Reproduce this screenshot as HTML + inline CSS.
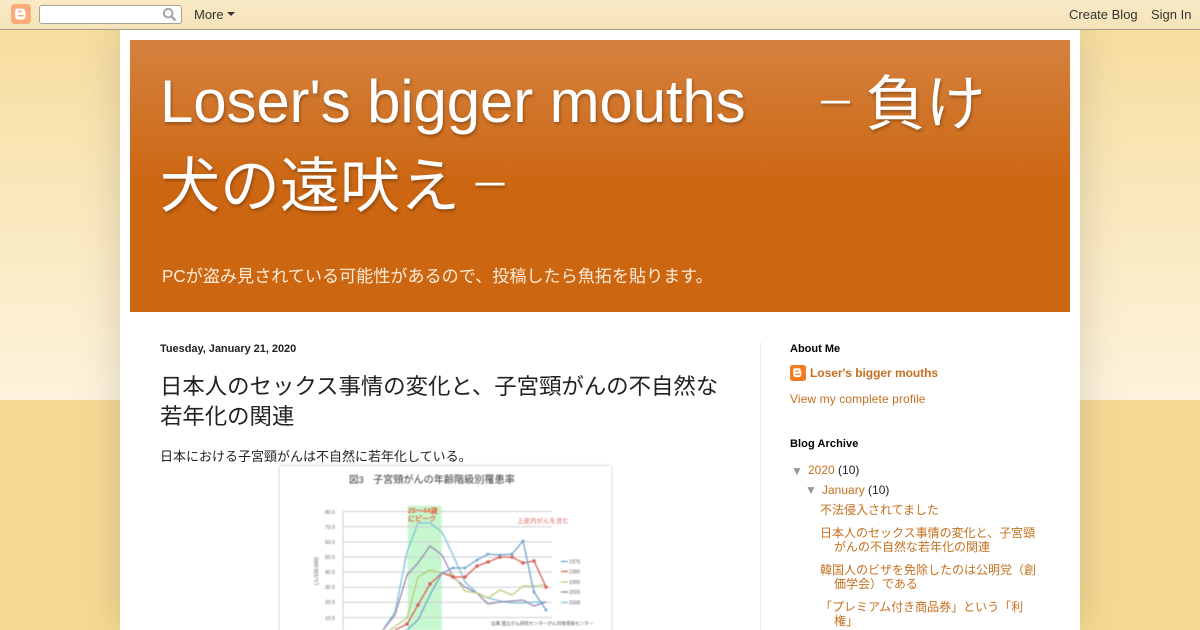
<!DOCTYPE html>
<html lang="ja"><head><meta charset="utf-8"><title>Loser's bigger mouths</title>
<style>
*{box-sizing:border-box}
html,body{margin:0;padding:0;width:1200px;height:630px;overflow:hidden}
body{position:relative;background:#f6da94;font-family:"Liberation Sans","WenQuanYi Zen Hei",sans-serif;color:#222}
.abs,.abs2{position:absolute;white-space:nowrap}
#bg{position:absolute;left:0;top:30px;width:1200px;height:370px;background:linear-gradient(#f7dea0,#fdf3dc)}
#nav{position:absolute;left:0;top:0;width:1200px;height:30px;background:linear-gradient(#f9eac6,#f5e3b8);border-bottom:1px solid #a79c8b;font-size:13px;color:#333}
#content{position:absolute;left:120px;top:30px;width:960px;height:600px;background:#fff;box-shadow:0 0 40px rgba(0,0,0,.15)}
#head{position:absolute;left:130px;top:40px;width:940px;height:272px;background:linear-gradient(#d5813e 0,#cc6611 150px,#cc6611 100%)}
#title{position:absolute;left:160px;top:61px;width:880px;color:#fff;font-size:60px;line-height:82px;text-shadow:1px 2px 3px rgba(0,0,0,.3)}
#title .d{display:inline-block;width:60px;text-align:center;font-size:40px;position:relative;top:-5px;line-height:40px}
#title .c{position:relative;top:3px}
a,.l{color:#c5701f}
</style></head><body>
<div id="bg"></div>
<div id="content"></div>
<div id="head"></div>
<div id="title"><span style="letter-spacing:-.14px">Loser's bigger mouths</span>　<span class="d">－</span><span class="c">負け犬の遠吠え</span><span class="d">－</span></div>
<div class="abs" style="left:162px;top:267px;font-size:17.1px;line-height:20px;color:#fdebd8">PCが盗み見されている可能性があるので、投稿したら魚拓を貼ります。</div>

<div id="nav">
<svg style="position:absolute;left:11px;top:4px" width="20" height="20" viewBox="0 0 20 20"><rect width="20" height="20" rx="4" fill="#fdab78"/><path d="M6.500 4.500h4.500a3 3 0 0 1 3 3v.8l.6.6v3.600a3 3 0 0 1-3 3H7a3 3 0 0 1-3-3V7a2.500 2.500 0 0 1 2.500-2.500z" fill="#fff"/><rect x="6.700" y="6.800" width="4" height="1.500" rx=".7" fill="#fdab78"/><rect x="6.700" y="11" width="6.300" height="1.500" rx=".7" fill="#fdab78"/></svg>
<div style="position:absolute;left:39px;top:5px;width:143px;height:19px;background:#fff;border:1px solid #a9a294;border-radius:3px"></div>
<svg style="position:absolute;left:162px;top:7px" width="15" height="15" viewBox="0 0 15 15"><circle cx="6.200" cy="6.200" r="4.300" fill="none" stroke="#a8a8a8" stroke-width="2"/><path d="M9.500 9.500l4 4" stroke="#a8a8a8" stroke-width="2.500"/></svg>
<span class="abs" style="left:194px;top:7px;line-height:15px">More</span>
<div style="position:absolute;left:227px;top:12px;border-left:4px solid transparent;border-right:4px solid transparent;border-top:4px solid #333"></div>
<span class="abs" style="left:1069px;top:7px;line-height:15px">Create Blog</span>
<span class="abs" style="left:1151px;top:7px;line-height:15px">Sign In</span>
</div>

<div class="abs" style="left:160px;top:343px;font-size:11px;font-weight:bold;line-height:13px;letter-spacing:-.04px">Tuesday, January 21, 2020</div>
<div class="abs" style="left:160px;top:372px;font-size:22.4px;line-height:30px;white-space:normal;width:570px">日本人のセックス事情の変化と、子宮頸がんの不自然な若年化の関連</div>
<div class="abs" style="left:160px;top:448px;font-size:13px;line-height:18px">日本における子宮頸がんは不自然に若年化している。</div>

<div style="position:absolute;left:280px;top:466px;width:331px;height:175px;background:#fff;box-shadow:0 0 3px rgba(0,0,0,.25)"></div>
<svg style="position:absolute;left:280px;top:465px;filter:blur(.55px)" width="331" height="165" viewBox="280 465 331 165" font-family="Liberation Sans,WenQuanYi Zen Hei,sans-serif">
<rect x="407.700" y="505.700" width="34" height="130" fill="#c6f7cf"/>
<g stroke="#cfcfcf" stroke-width="1">
<path d="M343 511.500H552M343 526.800H552M343 541.900H552M343 557H552M343 572.100H552M343 587.200H552M343 602.300H552M343 617.500H552M343 511.500V630"/>
</g>
<g fill="#666" font-size="5">
<text x="325" y="514">80.0</text><text x="325" y="529">70.0</text><text x="325" y="544">60.0</text><text x="325" y="559">50.0</text><text x="325" y="574">40.0</text><text x="325" y="589">30.0</text><text x="325" y="604">20.0</text><text x="325" y="620">10.0</text>
</g>
<text transform="translate(318,585) rotate(-90)" font-size="5" fill="#555">(人/100,000)</text>
<text x="349" y="483" font-size="9.500" fill="#333">図3</text>
<text x="373" y="483" font-size="10.150" fill="#333">子宮頸がんの年齢階級別罹患率</text>
<text x="408" y="513" font-size="7" font-weight="bold" fill="#e8643c">25～44歳</text>
<text x="408" y="521" font-size="7" font-weight="bold" fill="#e8643c">にピーク</text>
<text x="517" y="523" font-size="6.500" fill="#d9686a">上皮内がんを含む</text>
<g fill="none" stroke-width="1.300">
<polyline stroke="#7ac3d6" points="383,630 395,612 407,552 418,523 430,523 442,532 453,555 465,582 477,593 488,598 500,601 512,603 523,603 534,602 546,602"/>
<polyline stroke="#9a86b8" points="383,630 395,615 407,575 418,563 430,546 442,555 453,577 465,587 477,593 488,604 500,602 512,601 523,600 534,606 546,602"/>
<polyline stroke="#b6cc78" points="390,630 407,618 418,577 430,570 442,573 453,575 465,591 477,593 488,598 500,590 512,595 523,586 534,586 546,585"/>
<polyline stroke="#d9605c" points="395,630 407,624 418,605 430,584 442,573 453,577 465,577 477,566 488,562 500,557 512,557 523,563 534,561 546,587"/>
<polyline stroke="#6fa3cf" points="400,632 407,630 418,620 430,595 442,573 453,568 465,568 477,560 488,554 500,555 512,554 523,541 534,592 546,610"/>
</g>
<g fill="#d9605c"><circle cx="407" cy="624" r="1.800"/><circle cx="418" cy="605" r="1.800"/><circle cx="430" cy="584" r="1.800"/><circle cx="453" cy="577" r="1.800"/><circle cx="465" cy="577" r="1.800"/><circle cx="477" cy="566" r="1.800"/><circle cx="488" cy="562" r="1.800"/><circle cx="500" cy="557" r="1.800"/><circle cx="512" cy="557" r="1.800"/><circle cx="523" cy="563" r="1.800"/><circle cx="534" cy="561" r="1.800"/><circle cx="546" cy="587" r="1.800"/></g>
<g fill="#6fa3cf"><circle cx="453" cy="568" r="1.400"/><circle cx="465" cy="568" r="1.400"/><circle cx="477" cy="560" r="1.400"/><circle cx="488" cy="554" r="1.400"/><circle cx="500" cy="555" r="1.400"/><circle cx="512" cy="554" r="1.400"/><circle cx="523" cy="541" r="1.400"/><circle cx="534" cy="592" r="1.400"/><circle cx="546" cy="610" r="1.400"/></g>
<g stroke-width="1.300"><path d="M561 561.500h7" stroke="#6fa3cf"/><path d="M561 571.500h7" stroke="#d9605c"/><path d="M561 582h7" stroke="#b6cc78"/><path d="M561 592h7" stroke="#9a86b8"/><path d="M561 602.500h7" stroke="#7ac3d6"/></g>
<g font-size="5" fill="#666"><text x="569" y="563.500">1975</text><text x="569" y="573.500">1985</text><text x="569" y="584">1995</text><text x="569" y="594">2005</text><text x="569" y="604.500">2008</text></g>
<text x="491" y="625" font-size="4.600" fill="#555">出典 国立がん研究センターがん対策情報センター</text>
</svg>

<div style="position:absolute;left:760px;top:342px;width:1px;height:288px;background:#eee"></div>
<div class="abs" style="left:790px;top:343px;font-size:11px;font-weight:bold;line-height:13px;color:#000">About Me</div>
<svg style="position:absolute;left:790px;top:365px" width="16" height="16" viewBox="0 0 16 16"><rect width="16" height="16" rx="2.500" fill="#f47c20"/><path d="M5.200 3.200h3.300a2.300 2.300 0 0 1 2.300 2.300v.8l.5.5v3a2.300 2.300 0 0 1-2.300 2.300H5.500a2.300 2.300 0 0 1-2.300-2.300V5.200a2 2 0 0 1 2-2z" fill="#fff"/><rect x="5.300" y="5.400" width="3.200" height="1.200" fill="#f47c20"/><rect x="5.300" y="8.800" width="5" height="1.200" fill="#f47c20"/></svg>
<div class="abs l" style="left:810px;top:366px;font-size:12px;font-weight:bold;line-height:14px;letter-spacing:-.04px">Loser's bigger mouths</div>
<div class="abs l" style="left:790px;top:392px;font-size:12px;line-height:14px;letter-spacing:.1px">View my complete profile</div>
<div class="abs" style="left:790px;top:438px;font-size:11px;font-weight:bold;line-height:13px;color:#000;letter-spacing:.08px">Blog Archive</div>
<div class="abs" style="left:791px;top:464px;font-size:12px;line-height:14px;color:#999">▼</div>
<div class="abs" style="left:808px;top:463px;font-size:12px;line-height:14px"><span class="l">2020</span> (10)</div>
<div class="abs" style="left:805px;top:483px;font-size:12px;line-height:14px;color:#999">▼</div>
<div class="abs" style="left:822px;top:483px;font-size:12px;line-height:14px"><span class="l">January</span> (10)</div>
<div class="abs l" style="left:820px;top:503px;font-size:12px;line-height:14px">不法侵入されてました</div>
<div class="abs l" style="left:820px;top:526px;font-size:12px;line-height:14px">日本人のセックス事情の変化と、子宮頸<br><span style="margin-left:14px">がんの不自然な若年化の関連</span></div>
<div class="abs l" style="left:820px;top:563px;font-size:12px;line-height:14px">韓国人のビザを免除したのは公明党（創<br><span style="margin-left:14px">価学会）である</span></div>
<div class="abs l" style="left:820px;top:600px;font-size:12px;line-height:14px">「プレミアム付き商品券」という「利<br><span style="margin-left:14px">権」</span></div>
</body></html>
